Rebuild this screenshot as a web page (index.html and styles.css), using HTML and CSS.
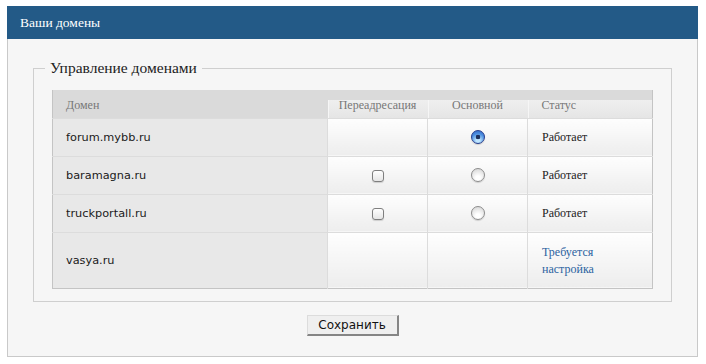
FILE: index.html
```html
<!DOCTYPE html>
<html lang="ru">
<head>
  <meta charset="UTF-8" />
  <title>Ваши домены</title>
  <link rel="stylesheet" href="styles.css">
</head>
<body>
  <div class="box">
    <div class="box-head">Ваши домены</div>
    <div class="box-body">
      <form>
        <fieldset>
          <legend>Управление доменами</legend>
          <table class="domains">
            <colgroup>
              <col class="c-name">
              <col class="c-redir">
              <col class="c-main">
              <col class="c-status">
            </colgroup>
            <thead>
              <tr>
                <th class="name">Домен</th>
                <th class="mid">Переадресация</th>
                <th class="mid">Основной</th>
                <th class="status">Статус</th>
              </tr>
            </thead>
            <tbody>
              <tr>
                <td class="name">forum.mybb.ru</td>
                <td class="mid"></td>
                <td class="mid"><input type="radio" name="main" checked></td>
                <td class="status">Работает</td>
              </tr>
              <tr>
                <td class="name">baramagna.ru</td>
                <td class="mid"><input type="checkbox"></td>
                <td class="mid"><input type="radio" name="main"></td>
                <td class="status">Работает</td>
              </tr>
              <tr>
                <td class="name">truckportall.ru</td>
                <td class="mid"><input type="checkbox"></td>
                <td class="mid"><input type="radio" name="main"></td>
                <td class="status">Работает</td>
              </tr>
              <tr class="tall">
                <td class="name">vasya.ru</td>
                <td class="mid"></td>
                <td class="mid"></td>
                <td class="status"><a href="#">Требуется<br>настройка</a></td>
              </tr>
            </tbody>
          </table>
        </fieldset>
        <div class="actions">
          <button type="button" class="btn">Сохранить</button>
        </div>
      </form>
    </div>
  </div>
</body>
</html>
```

FILE: styles.css
```css
/* BASE */
* {
  box-sizing: border-box;
}
body {
  margin: 6px 8px 0 7px;
  background: #fff;
  font-family: "Liberation Serif", "Times New Roman", serif;
  color: #222;
}

/* PANEL */
.box-head {
  height: 33px;
  line-height: 33px;
  padding-left: 13px;
  background: #235a87;
  color: #fff;
  font-size: 13.5px;
}
.box-body {
  background: #f6f6f6;
  border: 1px solid #c9c9c9;
  border-top: none;
  padding: 20px 25px 20px 25px;
}

/* FIELDSET */
fieldset {
  margin: 0;
  border: 1px solid #cfcfcf;
  padding: 13px 18px 12px;
}
legend {
  margin-left: -7px;
  padding: 0 5px;
  font-size: 15.5px;
  color: #222;
}

/* TABLE */
.domains {
  width: 100%;
  table-layout: fixed;
  border-collapse: collapse;
  border: 1px solid #c4c4c4;
  border-top: none;
  font-size: 12px;
}
.c-name { width: 275px; }
.c-redir, .c-main { width: 100px; }
.domains th {
  height: 28px;
  padding: 4px 0 0;
  font-weight: normal;
  color: #777;
  text-align: left;
  background: #dadada;
}
.domains th.mid,
.domains th.status {
  background: #dadada no-repeat left bottom;
  background-image: linear-gradient(to right, #f6f6f6 1px, transparent 1px),
                    linear-gradient(#efefef, #e5e5e5);
  background-size: 100% 18px, 100% 18px;
}
.domains td {
  height: 38px;
  padding: 0;
  border-top: 1px solid #dcdcdc;
  border-left: 1px solid #dcdcdc;
  background: linear-gradient(#fefefe, #ededed);
}
.domains tr.tall td {
  height: 56px;
}
.domains .name {
  padding-left: 13px;
}
.domains td.name {
  background: #e8e8e8;
  border-left: none;
  font-family: "DejaVu Sans", Verdana, sans-serif;
  font-size: 11.3px;
  color: #1a1a1a;
}
.domains .mid {
  text-align: center;
}
.domains .status {
  padding-left: 14px;
}
.domains td.status {
  line-height: 17px;
  padding-top: 1px;
}
.domains a {
  color: #2b62a0;
  text-decoration: none;
}

/* CONTROLS */
.domains input {
  -webkit-appearance: none;
  appearance: none;
  display: inline-block;
  margin: 0;
  vertical-align: middle;
  position: relative;
}
.domains input[type="radio"] {
  width: 14px;
  height: 14px;
  border-radius: 50%;
  border: 1px solid #8c8c8c;
  background: radial-gradient(circle at 50% 75%, #ffffff 20%, #dcdcdc 80%);
  box-shadow: 0 1px 1px rgba(0,0,0,0.15);
  top: -1px;
}
.domains input[type="radio"]:checked {
  border-color: #2a3f8c;
  background: radial-gradient(circle at 50% 50%, #1d2f5c 0, #1d2f5c 2px, transparent 2.6px),
              radial-gradient(circle at 50% 80%, #bfe6ff 15%, #4d8fe0 60%, #2d62c4 100%);
}
.domains input[type="checkbox"] {
  width: 12px;
  height: 12px;
  border-radius: 3px;
  border: 1px solid #7f7f7f;
  background: linear-gradient(#ffffff, #e6e6e6);
  box-shadow: 0 1px 1px rgba(0,0,0,0.15);
  top: 0;
}

/* BUTTON */
.actions {
  margin-top: 13px;
  text-align: center;
}
.btn {
  width: 92px;
  height: 21px;
  padding: 0 0 1px;
  background: #efefef;
  border: 1px solid #dcdcdc;
  border-right: 2px solid #858585;
  border-bottom: 2px solid #858585;
  font-family: "DejaVu Sans", Verdana, sans-serif;
  font-size: 12px;
  color: #111;
  cursor: pointer;
}
```
